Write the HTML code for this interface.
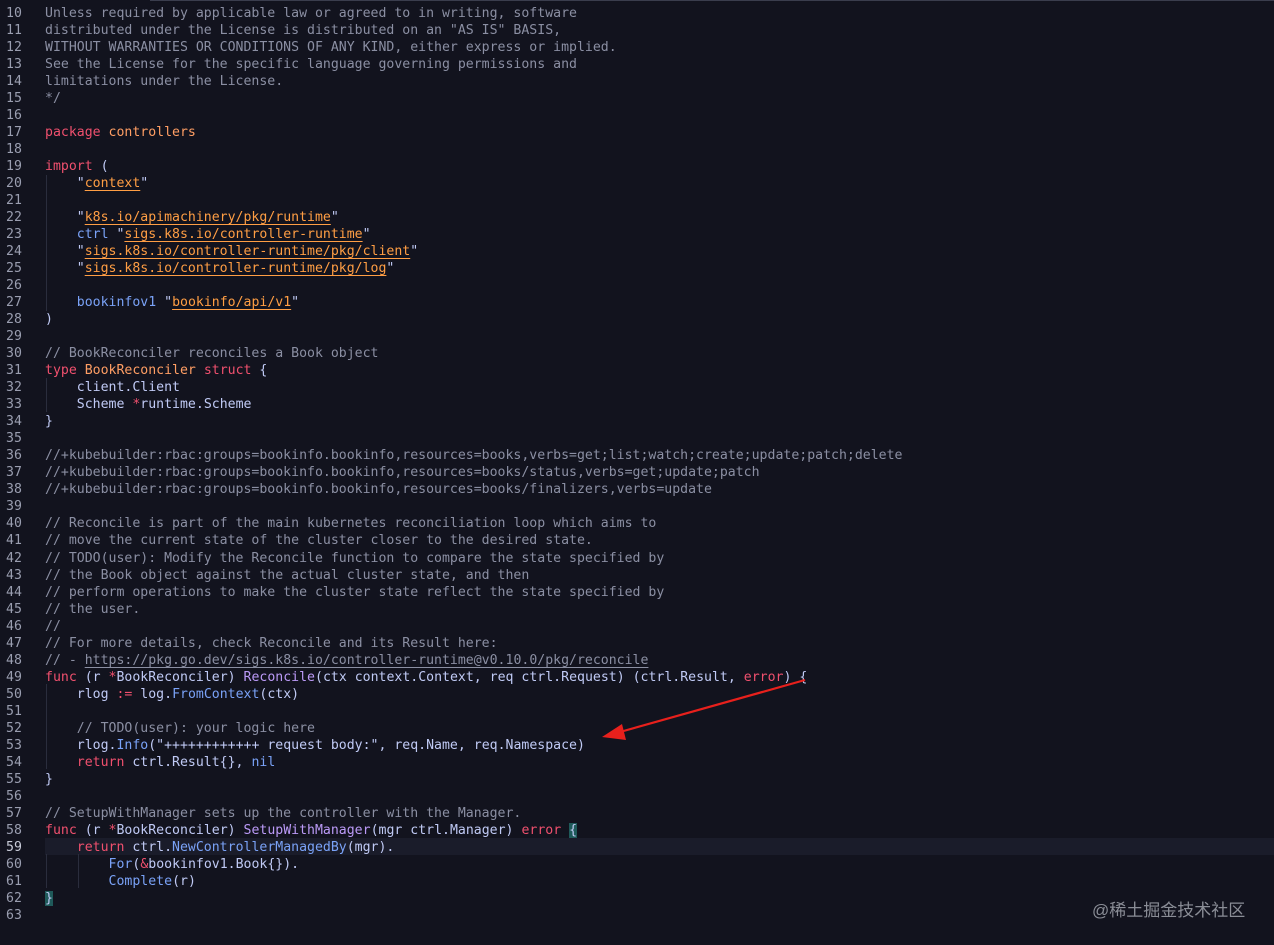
<!DOCTYPE html>
<html><head><meta charset="utf-8"><style>
body{margin:0;background:#12131e;width:1274px;height:945px;overflow:hidden;position:relative;font-family:"DejaVu Sans Mono","Liberation Mono",monospace;font-size:13.2px;}
.topl{position:absolute;left:150px;top:0;right:0;height:1px;background:#3a3d4d}
.cur{position:absolute;left:45px;right:0;top:838px;height:17px;background:#1a1c2a}
#code{position:absolute;top:5px;left:0;}
.l{height:17.02px;line-height:17px;white-space:pre;color:#c0caf5;position:relative}
.n{display:inline-block;width:45px;padding-left:6px;box-sizing:border-box;color:#9a9eb0}
.c{color:#8b8fa3}.k{color:#f0506e}.s{color:#ff9e44;text-decoration:underline;text-underline-offset:3px}.q{color:#c0caf5}
.b{color:#7aa2f7}.f{color:#bb9af7}.o{color:#ff9e64}.t{color:#e0af68}.u{text-decoration:underline;text-underline-offset:3px}
.br{background:#1f5a5a;color:#c0caf5}
.g{position:absolute;width:1px;background:#2a2d3d}
.wm{position:absolute;left:1092px;top:896px;color:#8a8d96;font-family:"Liberation Sans","Noto Sans CJK SC",sans-serif;font-size:17px}
</style></head><body>
<div class="topl"></div>
<div class="cur"></div>
<div class="g" style="left:46px;top:175px;height:136px"></div>
<div class="g" style="left:46px;top:378px;height:34px"></div>
<div class="g" style="left:46px;top:684px;height:85px"></div>
<div class="g" style="left:46px;top:854px;height:34px"></div>
<div class="g" style="left:78px;top:854px;height:34px"></div>
<div id="code">
<div class="l"><span class="n">10</span><span class="c">Unless required by applicable law or agreed to in writing, software</span></div>
<div class="l"><span class="n">11</span><span class="c">distributed under the License is distributed on an "AS IS" BASIS,</span></div>
<div class="l"><span class="n">12</span><span class="c">WITHOUT WARRANTIES OR CONDITIONS OF ANY KIND, either express or implied.</span></div>
<div class="l"><span class="n">13</span><span class="c">See the License for the specific language governing permissions and</span></div>
<div class="l"><span class="n">14</span><span class="c">limitations under the License.</span></div>
<div class="l"><span class="n">15</span><span class="c">*/</span></div>
<div class="l"><span class="n">16</span></div>
<div class="l"><span class="n">17</span><span class="k">package</span> <span class="o">controllers</span></div>
<div class="l"><span class="n">18</span></div>
<div class="l"><span class="n">19</span><span class="k">import</span> (</div>
<div class="l"><span class="n">20</span>    "<span class="s">context</span>"</div>
<div class="l"><span class="n">21</span></div>
<div class="l"><span class="n">22</span>    "<span class="s">k8s.io/apimachinery/pkg/runtime</span>"</div>
<div class="l"><span class="n">23</span>    <span class="b">ctrl</span> "<span class="s">sigs.k8s.io/controller-runtime</span>"</div>
<div class="l"><span class="n">24</span>    "<span class="s">sigs.k8s.io/controller-runtime/pkg/client</span>"</div>
<div class="l"><span class="n">25</span>    "<span class="s">sigs.k8s.io/controller-runtime/pkg/log</span>"</div>
<div class="l"><span class="n">26</span></div>
<div class="l"><span class="n">27</span>    <span class="b">bookinfov1</span> "<span class="s">bookinfo/api/v1</span>"</div>
<div class="l"><span class="n">28</span>)</div>
<div class="l"><span class="n">29</span></div>
<div class="l"><span class="n">30</span><span class="c">// BookReconciler reconciles a Book object</span></div>
<div class="l"><span class="n">31</span><span class="k">type</span> <span class="o">BookReconciler</span> <span class="k">struct</span> {</div>
<div class="l"><span class="n">32</span>    client.Client</div>
<div class="l"><span class="n">33</span>    Scheme <span class="k">*</span>runtime.Scheme</div>
<div class="l"><span class="n">34</span>}</div>
<div class="l"><span class="n">35</span></div>
<div class="l"><span class="n">36</span><span class="c">//+kubebuilder:rbac:groups=bookinfo.bookinfo,resources=books,verbs=get;list;watch;create;update;patch;delete</span></div>
<div class="l"><span class="n">37</span><span class="c">//+kubebuilder:rbac:groups=bookinfo.bookinfo,resources=books/status,verbs=get;update;patch</span></div>
<div class="l"><span class="n">38</span><span class="c">//+kubebuilder:rbac:groups=bookinfo.bookinfo,resources=books/finalizers,verbs=update</span></div>
<div class="l"><span class="n">39</span></div>
<div class="l"><span class="n">40</span><span class="c">// Reconcile is part of the main kubernetes reconciliation loop which aims to</span></div>
<div class="l"><span class="n">41</span><span class="c">// move the current state of the cluster closer to the desired state.</span></div>
<div class="l"><span class="n">42</span><span class="c">// TODO(user): Modify the Reconcile function to compare the state specified by</span></div>
<div class="l"><span class="n">43</span><span class="c">// the Book object against the actual cluster state, and then</span></div>
<div class="l"><span class="n">44</span><span class="c">// perform operations to make the cluster state reflect the state specified by</span></div>
<div class="l"><span class="n">45</span><span class="c">// the user.</span></div>
<div class="l"><span class="n">46</span><span class="c">//</span></div>
<div class="l"><span class="n">47</span><span class="c">// For more details, check Reconcile and its Result here:</span></div>
<div class="l"><span class="n">48</span><span class="c">// - <span class="u">https://pkg.go.dev/sigs.k8s.io/controller-runtime@v0.10.0/pkg/reconcile</span></span></div>
<div class="l"><span class="n">49</span><span class="k">func</span> (r <span class="k">*</span>BookReconciler) <span class="f">Reconcile</span>(ctx context.Context, req ctrl.Request) (ctrl.Result, <span class="k">error</span>) {</div>
<div class="l"><span class="n">50</span>    rlog <span class="k">:=</span> log.<span class="b">FromContext</span>(ctx)</div>
<div class="l"><span class="n">51</span></div>
<div class="l"><span class="n">52</span>    <span class="c">// TODO(user): your logic here</span></div>
<div class="l"><span class="n">53</span>    rlog.<span class="b">Info</span>("++++++++++++ request body:", req.Name, req.Namespace)</div>
<div class="l"><span class="n">54</span>    <span class="k">return</span> ctrl.Result{}, <span class="b">nil</span></div>
<div class="l"><span class="n">55</span>}</div>
<div class="l"><span class="n">56</span></div>
<div class="l"><span class="n">57</span><span class="c">// SetupWithManager sets up the controller with the Manager.</span></div>
<div class="l"><span class="n">58</span><span class="k">func</span> (r <span class="k">*</span>BookReconciler) <span class="f">SetupWithManager</span>(mgr ctrl.Manager) <span class="k">error</span> <span class="br">{</span></div>
<div class="l"><span class="n" style="color:#c8cbd8">59</span>    <span class="k">return</span> ctrl.<span class="b">NewControllerManagedBy</span>(mgr).</div>
<div class="l"><span class="n">60</span>        <span class="b">For</span>(<span class="k">&amp;</span>bookinfov1.Book{}).</div>
<div class="l"><span class="n">61</span>        <span class="b">Complete</span>(r)</div>
<div class="l"><span class="n">62</span><span class="br">}</span></div>
<div class="l"><span class="n">63</span></div>
</div>
<svg style="position:absolute;left:0;top:0" width="1274" height="945">
<line x1="805" y1="680" x2="620" y2="732" stroke="#e8201c" stroke-width="2.2"/>
<polygon points="602,737 622,724 626,740" fill="#e8201c"/>
</svg>
<div class="wm">@稀土掘金技术社区</div>
</body></html>
